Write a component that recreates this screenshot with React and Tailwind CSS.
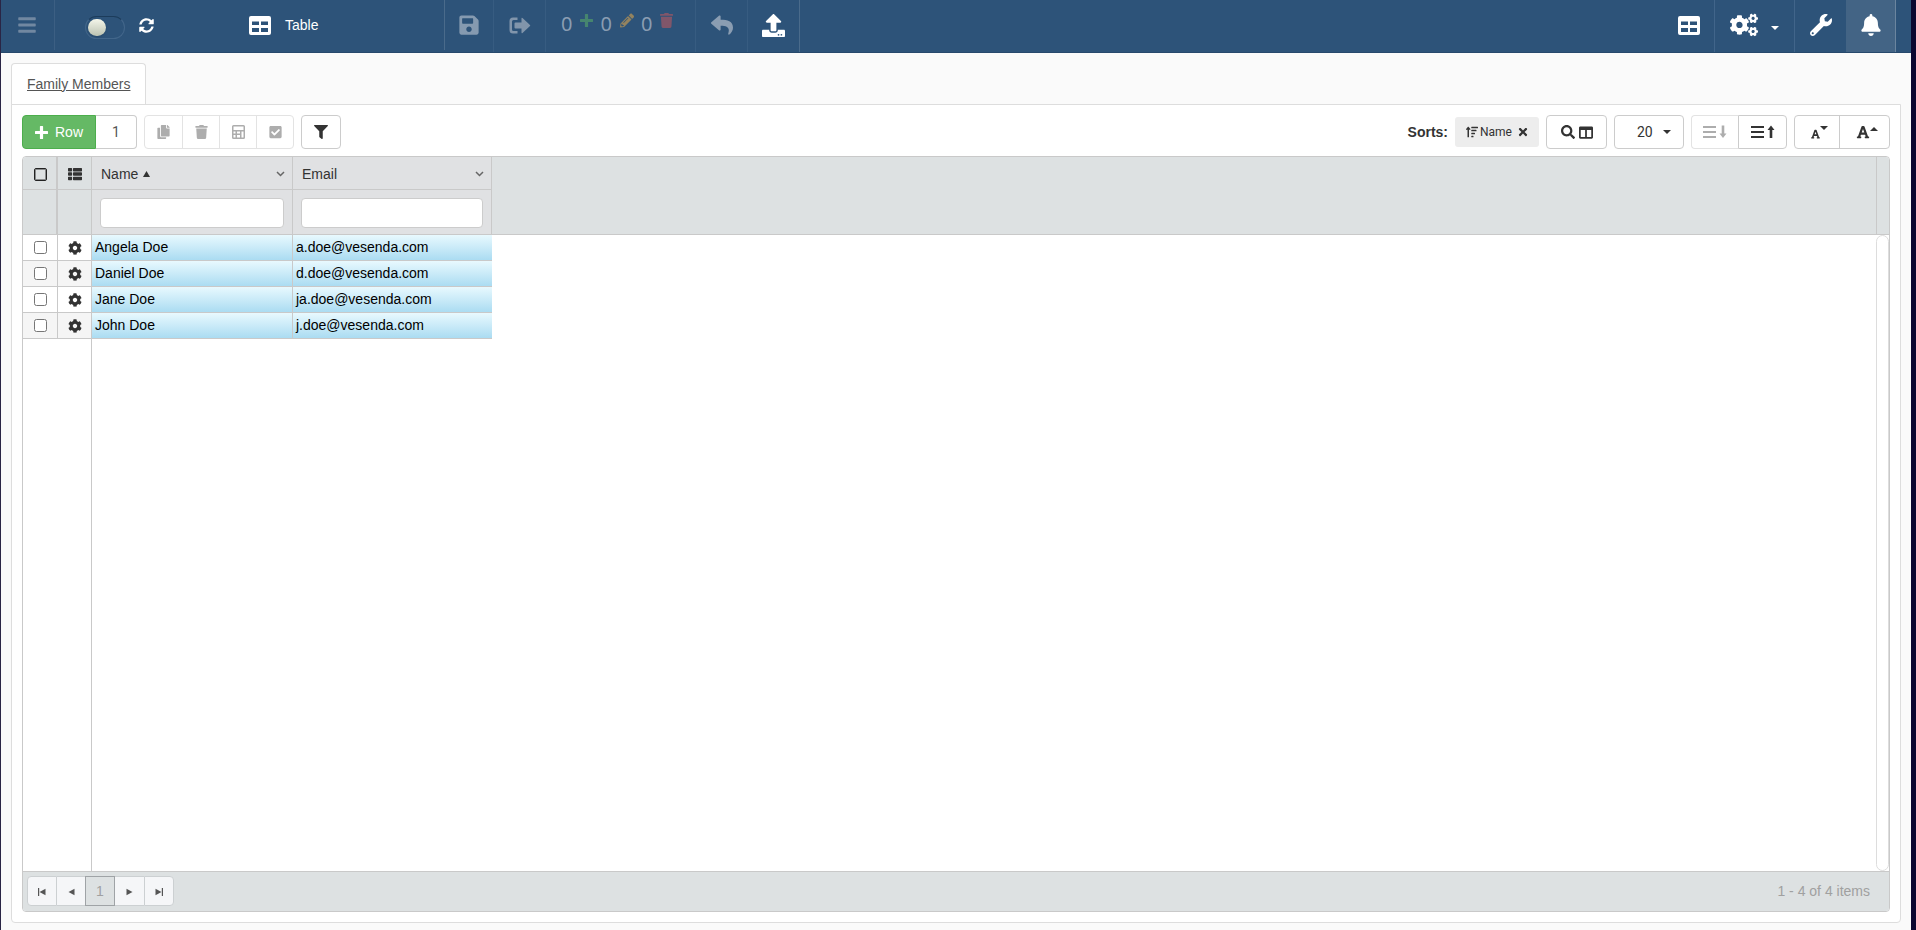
import React, { useState } from 'react';
import {
  FaBars,
  FaBell,
  FaCheckSquare,
  FaCog,
  FaCogs,
  FaColumns,
  FaCopy,
  FaFilter,
  FaFont,
  FaPencilAlt,
  FaReply,
  FaSave,
  FaSearch,
  FaSortAmountUp,
  FaSyncAlt,
  FaThList,
  FaTimes,
  FaTrash,
  FaUpload,
  FaWrench
} from 'react-icons/fa';

const ROWS = [
  { name: 'Angela Doe', email: 'a.doe@vesenda.com' },
  { name: 'Daniel Doe', email: 'd.doe@vesenda.com' },
  { name: 'Jane Doe', email: 'ja.doe@vesenda.com' },
  { name: 'John Doe', email: 'j.doe@vesenda.com' }
];

/* ---------- Icons ---------- */

const TableIcon = () => (
  <svg className="w-[22px] h-[19px]" viewBox="0 0 22 19" fill="currentColor">
    <path
      fillRule="evenodd"
      d="M2 0h18a2 2 0 0 1 2 2v15a2 2 0 0 1-2 2H2a2 2 0 0 1-2-2V2a2 2 0 0 1 2-2zM3 5.500v3.500h7V5.500zM12 5.500v3.500h7V5.500zM3 12v4h7v-4zM12 12v4h7v-4z"
    />
  </svg>
);

const ExitIcon = () => (
  <svg className="w-[22px] h-[17px]" viewBox="0 0 22 17" fill="currentColor">
    <path d="M8.500 0.500v2.500H4.500Q3 3 3 4.500v8Q3 14 4.500 14h4v2.500H4Q0.500 16.500 0.500 13V4Q0.500 0.500 4 0.500z" />
    <path d="M6.500 5.500h6V1.500q0-1.200 1-0.500l7.500 7q.5.500 0 1l-7.500 7q-1 .7-1-.5v-4h-6q-1 0-1-1v-4q0-1 1-1z" />
  </svg>
);

const PlusIcon = ({ className }) => (
  <svg className={`h-[13px] w-[13px] ${className ?? ''}`} viewBox="0 0 13 13" fill="currentColor">
    <path d="M5.500 0h2q.6 0 .6.600v4.300h4.300q.6 0 .6.600v2q0 .6-.6.600H8.100v4.300q0 .6-.6.600h-2q-.6 0-.6-.6V8.100H.600Q0 8.100 0 7.500v-2q0-.6.600-.6h4.300V.600q0-.6.600-.6z" />
  </svg>
);

const CalcIcon = () => (
  <svg className="w-[13px] h-[14px]" viewBox="0 0 13 14" fill="currentColor">
    <path
      fillRule="evenodd"
      d="M1.500 0h10A1.500 1.500 0 0 1 13 1.500v11a1.500 1.500 0 0 1-1.500 1.500h-10A1.500 1.500 0 0 1 0 12.500v-11A1.500 1.500 0 0 1 1.500 0zM1.500 1.500v3.500h10V1.500zM1.500 6.500v2h2v-2zM5 6.500v2h3v-2zM9.500 6.500v6h2v-6zM1.500 10v2.500h2v-2.500zM5 10v2.500h3v-2.500z"
    />
  </svg>
);

const LinesIcon = ({ up }) => (
  <svg className="w-6 h-[14px]" viewBox="0 0 24 14" fill="currentColor">
    <path d="M0 1h13v2H0zM0 6h13v2H0zM0 11h13v2H0z" />
    {up
      ? <path d="M20 0.500l3.500 4.500h-2.200V13h-2.600V5h-2.200z" />
      : <path d="M20 13l3.500-4.500h-2.200V0.500h-2.600V8.500h-2.200z" />}
  </svg>
);

const CaretDown = ({ className }) => (
  <svg className={`h-[4px] w-[8px] ${className ?? ''}`} viewBox="0 0 8 4" fill="currentColor">
    <path d="M0 0h8L4 4z" />
  </svg>
);

const CaretUp = ({ className }) => (
  <svg className={`h-[4px] w-[8px] ${className ?? ''}`} viewBox="0 0 8 4" fill="currentColor">
    <path d="M0 4h8L4 0z" />
  </svg>
);

const ChevronIcon = () => (
  <svg className="w-[9px] h-[6px]" viewBox="0 0 9 6" fill="none" stroke="#666" strokeWidth="1.500">
    <path d="M1 1l3.500 3.500L8 1" />
  </svg>
);

const PagerIcon = ({ kind }) => {
  const back = kind === 'first' || kind === 'prev';
  const edge = kind === 'first' || kind === 'last';
  return (
    <svg
      className={`w-[8px] h-[8px] mt-[3px] ${back ? 'rotate-180' : ''}`}
      viewBox="0 0 8 8"
      fill="#555"
    >
      <path d="M0.500 0.800l6 3.200-6 3.200z" />
      {edge && <path d="M6.800 0h1.200v8h-1.200z" />}
    </svg>
  );
};

/* ---------- Top bar ---------- */

const TopBar = () => {
  const [live, setLive] = useState(false);

  return (
    <header className="flex h-[53px] shrink-0 border-b border-[#27496c] bg-[#2d5379] text-white">
      <button
        aria-label="Menu"
        className="flex h-[50px] w-[54px] items-center justify-center border-r border-[#3c5f83] pr-px"
      >
        <FaBars className="h-[20px] w-[18px] text-[#7188a1]" />
      </button>

      <div className="flex h-[50px] w-[390px] items-center border-r border-[#4a6b8b] pl-[30px]">
        <label className="mt-1 flex h-[23px] w-10 cursor-pointer items-center rounded-full border border-[#42668a] border-t-[#1c3c5b] pl-[2px]">
          <input
            type="checkbox"
            aria-label="Auto refresh"
            className="sr-only"
            checked={live}
            onChange={(e) => setLive(e.target.checked)}
          />
          <span
            className={`h-[17px] w-[18px] rounded-full bg-linear-to-b from-[#f4f6ea] to-[#bcc3b2] shadow ${live ? 'ml-4' : ''}`}
          />
        </label>
        <button aria-label="Refresh" className="ml-[14px]">
          <FaSyncAlt className="h-[15px] w-[15px]" />
        </button>
        <div className="ml-[95px] flex items-center gap-[14px]">
          <TableIcon />
          <span>Table</span>
        </div>
      </div>

      <button
        aria-label="Save"
        className="flex w-[49px] items-center justify-center border-r border-[#375c81] pb-[2px] text-[#859ab0]"
      >
        <FaSave className="h-[22px] w-[20px]" />
      </button>
      <button
        aria-label="Save and close"
        className="flex w-[52px] items-center justify-center border-r border-[#375c81] pb-[2px] text-[#8195ab]"
      >
        <ExitIcon />
      </button>
      <div className="flex w-[150px] items-center border-r border-[#375c81] pb-[11px] pl-[15px] font-['Noto_Sans',sans-serif] text-[20px] text-[#8a9db2]">
        <span className="mt-2">0</span>
        <PlusIcon className="ml-2 text-[#46856f]" />
        <span className="ml-[7px] mt-2">0</span>
        <FaPencilAlt className="ml-2 h-[15px] w-[14px] text-[#93835f]" />
        <span className="ml-[7px] mt-2">0</span>
        <FaTrash className="ml-2 h-[15px] w-[13px] text-[#80566a]" />
      </div>
      <button
        aria-label="Undo"
        className="flex w-[52px] items-center justify-center border-r border-[#375c81] pb-[2px] text-[#8a9db2]"
      >
        <FaReply className="h-[22px] w-[22px]" />
      </button>
      <button
        aria-label="Upload"
        className="flex w-[52px] items-center justify-center border-r border-[#4a6b8b] pb-[2px]"
      >
        <FaUpload className="h-[23px] w-[23px]" />
      </button>

      <div className="ml-auto flex">
        <button
          aria-label="Tables"
          className="flex w-[52px] items-center justify-center border-r border-[#41658a] pb-[2px]"
        >
          <TableIcon />
        </button>
        <button
          aria-label="Settings"
          className="flex w-20 items-center justify-center gap-[13px] border-r border-[#41658a] pb-[2px]"
        >
          <FaCogs className="h-[24px] w-[28px]" />
          <CaretDown className="mt-[5px]" />
        </button>
        <button aria-label="Tools" className="flex w-[51px] items-center justify-center pb-[2px]">
          <FaWrench className="h-[22px] w-[22px]" />
        </button>
        <button
          aria-label="Notifications"
          className="mr-[15px] flex w-[50px] items-center justify-center border-r border-[#6b859f] bg-[#436485] pb-[2px]"
        >
          <FaBell className="h-[22px] w-[20px]" />
        </button>
      </div>
    </header>
  );
};

/* ---------- Toolbar over the grid ---------- */

const Toolbar = () => (
  <div className="flex items-center justify-between">
    <div className="flex items-center gap-[7px]">
      <div className="flex h-[34px]">
        <button className="flex w-[74px] items-center justify-center gap-[7px] rounded-l border border-[#4cae4c] bg-[#65b965] text-white">
          <PlusIcon />
          Row
        </button>
        <input
          aria-label="Rows to add"
          defaultValue="1"
          className="w-[41px] rounded-r border border-l-0 border-[#ccc] text-center font-[Roboto,sans-serif] text-[#555]"
        />
      </div>

      <div className="flex h-[34px] divide-x divide-[#e3e3e3] rounded border border-[#e3e3e3] text-[#adadad]">
        <button aria-label="Copy" className="flex w-[38px] items-center justify-center">
          <FaCopy className="h-[14px] w-[13px]" />
        </button>
        <button aria-label="Delete" className="flex w-[37px] items-center justify-center">
          <FaTrash className="h-[14px] w-[13px]" />
        </button>
        <button aria-label="Calculate" className="flex w-[37px] items-center justify-center">
          <CalcIcon />
        </button>
        <button aria-label="Check" className="flex w-[36px] items-center justify-center">
          <FaCheckSquare className="h-[14px] w-[13px]" />
        </button>
      </div>

      <button
        aria-label="Filter"
        className="flex h-[34px] w-10 items-center justify-center rounded border border-[#ccc]"
      >
        <FaFilter className="h-[14px] w-[14px]" />
      </button>
    </div>

    <div className="flex items-center gap-[7px]">
      <b>Sorts:</b>
      <button className="flex h-[30px] w-[84px] items-center justify-center rounded-[3px] bg-[#ededed] font-[Roboto,sans-serif] text-xs">
        <FaSortAmountUp className="mr-[2px] h-3 w-3" />
        Name
        <FaTimes className="ml-[6px] h-3 w-[10px]" />
      </button>
      <button
        aria-label="Find column"
        className="flex h-[34px] w-[61px] items-center justify-center gap-1 rounded border border-[#ccc]"
      >
        <FaSearch className="h-[14px] w-[14px]" />
        <FaColumns className="h-[15px] w-[14px]" />
      </button>
      <div className="relative flex h-[34px] w-[70px] items-center">
        <select
          aria-label="Page size"
          defaultValue="20"
          className="h-full w-full appearance-none rounded border border-[#ccc] pl-[22px] font-[Roboto,sans-serif]"
        >
          <option>10</option>
          <option>20</option>
          <option>50</option>
        </select>
        <CaretDown className="pointer-events-none absolute right-[13px]" />
      </div>
      <div className="flex h-[34px]">
        <button
          aria-label="Collapse rows"
          className="flex w-[47px] items-center justify-center rounded-l border border-r-0 border-[#e3e3e3] text-[#adadad]"
        >
          <LinesIcon />
        </button>
        <button
          aria-label="Expand rows"
          className="flex w-[49px] items-center justify-center rounded-r border border-[#ccc]"
        >
          <LinesIcon up />
        </button>
      </div>
      <div className="flex h-[34px] divide-x divide-[#ccc] rounded border border-[#ccc]">
        <button aria-label="Smaller text" className="flex w-[45px] items-center justify-center pl-1">
          <FaFont className="mt-[3px] h-[10px] w-[9px]" />
          <CaretDown className="mb-[9px]" />
        </button>
        <button aria-label="Larger text" className="flex w-[49px] items-center justify-center pl-1">
          <FaFont className="h-[14px] w-[14px]" />
          <CaretUp className="mb-[7px]" />
        </button>
      </div>
    </div>
  </div>
);

/* ---------- Grid ---------- */

const HeaderCell = ({ title, sorted, className }) => (
  <div className={`flex flex-col border-r border-[#c9c9c9] bg-[#e0e1e3] ${className}`}>
    <div className="flex h-[33px] items-center border-b border-[#c9c9c9] pl-[9px] pr-[7px] pt-[2px]">
      {title}
      {sorted && (
        <svg className="ml-[5px] h-[6px] w-[7px]" viewBox="0 0 7 6" fill="currentColor">
          <path d="M0 6L3.500 0 7 6z" />
        </svg>
      )}
      <span className="ml-auto"><ChevronIcon /></span>
    </div>
    <div className="flex h-11 items-center px-2 pt-[2px]">
      <input
        aria-label={`Filter ${title}`}
        className="h-[30px] w-full rounded border border-[#ccc] bg-white px-2"
      />
    </div>
  </div>
);

const Grid = () => (
  <div className="mt-[7px] flex flex-1 flex-col overflow-hidden rounded border border-[#c9c9c9]">
    {/* Header */}
    <div className="flex border-b border-[#c9c9c9] bg-[#dde1e2]">
      <div className="w-[35px] border-r-2 border-[#c9c9c9]">
        <div className="flex h-[33px] items-center justify-center border-b border-[#c9c9c9] pt-[2px] pl-px">
          <input
            type="checkbox"
            aria-label="Select all"
            className="h-[13px] w-[13px] appearance-none rounded-[2px] border-[1px] border-[#222] shadow-[inset_0_0_0_1px_#8a8c8d]"
          />
        </div>
      </div>
      <div className="w-[34px] border-r border-[#c9c9c9]">
        <div className="flex h-[33px] items-center justify-center border-b border-[#c9c9c9] pt-[2px]">
          <FaThList className="h-[14px] w-[14px]" />
        </div>
      </div>
      <HeaderCell title="Name" sorted className="w-[201px]" />
      <HeaderCell title="Email" className="w-[199px]" />
      <div className="ml-auto w-[13px] border-l border-[#c9c9c9]" />
    </div>

    {/* Rows */}
    <div className="flex flex-1">
      <div className="w-[69px] border-r border-[#c9c9c9]">
        <table className="w-full table-fixed border-separate border-spacing-0">
          <tbody>
            {ROWS.map((row) => (
              <tr key={row.name} className="even:bg-[#f5f5f5]">
                <td className="h-[26px] w-[35px] border-b border-r border-[#c9c9c9] p-0">
                  <input
                    type="checkbox"
                    aria-label={`Select ${row.name}`}
                    className="mx-auto block h-[13px] w-[13px]"
                  />
                </td>
                <td className="h-[26px] border-b border-[#c9c9c9] p-0">
                  <button aria-label={`Options ${row.name}`} className="mx-auto block">
                    <FaCog className="h-[14px] w-[14px]" />
                  </button>
                </td>
              </tr>
            ))}
          </tbody>
        </table>
      </div>
      <div className="flex-1">
        <table className="w-[400px] table-fixed border-separate border-spacing-0 text-black">
          <tbody>
            {ROWS.map((row) => (
              <tr key={row.name}>
                <td className="h-[26px] w-[201px] border-b border-r border-[#c9c9c9] bg-linear-to-b from-[#e8f9fe] to-[#abdcf2] p-0 pb-[2px] pl-[3px] leading-5">
                  {row.name}
                </td>
                <td className="h-[26px] border-b border-[#c9c9c9] bg-linear-to-b from-[#e8f9fe] to-[#abdcf2] p-0 pb-[2px] pl-[3px] leading-5">
                  {row.email}
                </td>
              </tr>
            ))}
          </tbody>
        </table>
      </div>
      <div className="w-[13px] rounded-full border border-[#ddd]" />
    </div>

    {/* Pager */}
    <div className="flex h-10 shrink-0 items-center justify-between border-t border-[#c9c9c9] bg-[#dde1e2] pb-[2px] pl-1 pr-[19px] text-[#a0a0a0]">
      <nav className="flex h-[30px]">
        <button aria-label="First page" className="flex w-[30px] items-center justify-center rounded-l border border-[#ccd0d2] bg-[#f5f6f8]">
          <PagerIcon kind="first" />
        </button>
        <button aria-label="Previous page" className="flex w-7 items-center justify-center border-y border-[#ccd0d2] bg-[#f5f6f8]">
          <PagerIcon kind="prev" />
        </button>
        <button className="w-[30px] border border-[#9fa3a6] bg-[#dde1e2]">1</button>
        <button aria-label="Next page" className="flex w-[29px] items-center justify-center border-y border-[#ccd0d2] bg-[#f5f6f8]">
          <PagerIcon kind="next" />
        </button>
        <button aria-label="Last page" className="flex w-[30px] items-center justify-center rounded-r border border-[#ccd0d2] bg-[#f5f6f8]">
          <PagerIcon kind="last" />
        </button>
      </nav>
      <span>1 - 4 of 4 items</span>
    </div>
  </div>
);

export default function App() {
  return (
    <div className="flex min-h-screen flex-col border-l border-l-[#2a2545] border-r-[5px] border-r-[#0b0630] bg-[#fafafa] font-['Liberation_Sans',Arial,sans-serif] text-sm text-[#333]">
      <TopBar />
      <main className="flex flex-1 flex-col px-[10px] pt-[10px] pb-[7px]">
        <div className="flex">
          <a
            href="#family"
            className="-mb-px flex h-[42px] items-center rounded-t border border-b-0 border-[#ddd] bg-white px-[15px] pb-[2px] text-[#555] underline"
          >
            Family Members
          </a>
        </div>
        <section className="flex flex-1 flex-col rounded-b border border-[#ddd] bg-white p-[10px]">
          <Toolbar />
          <Grid />
        </section>
      </main>
    </div>
  );
}
